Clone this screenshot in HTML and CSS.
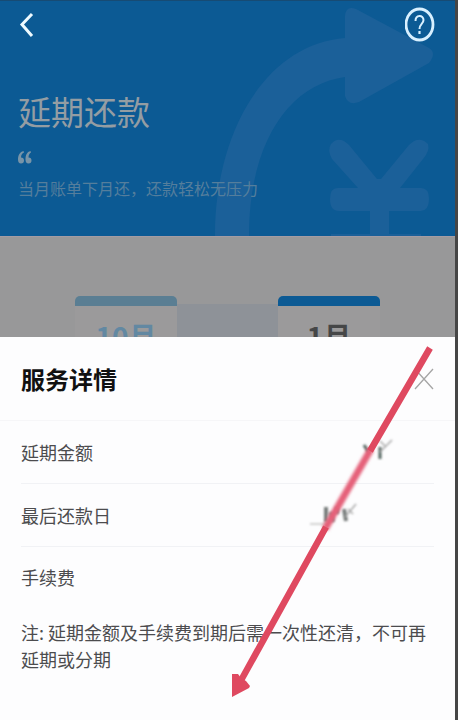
FILE: index.html
```html
<!DOCTYPE html>
<html lang="zh-CN">
<head>
<meta charset="utf-8">
<meta name="viewport" content="width=device-width, initial-scale=1">
<title>延期还款</title>
<link rel="stylesheet" href="styles.css">
</head>
<body>
<div class="app">
  <header class="hero">
    <svg class="hero-art" viewBox="0 0 244 236" aria-hidden="true">
      <path d="M0 236C0 130 52 44 130 38V16Q131 5 141 9L214 48Q222 53 214 63L144 102Q133 106 130 96V77C76 84 34 140 34 236Z"/>
      <path d="M116 144Q124 135 134 145L162 179H166L194 145Q204 135 213 144Q215 151 208 159L185 188H206Q214 188 214 199T206 211H174V234H206V236H116V234H155V211H124Q115 211 115 199T124 188H143L117 159Q112 150 116 144Z"/>
    </svg>
    <nav class="nav">
      <button class="icon-button" type="button" aria-label="返回">
        <svg width="16" height="26" viewBox="0 0 16 26"><path d="M14 2L4 12.500L14 24" fill="none" stroke="#eefaff" stroke-width="3"/></svg>
      </button>
      <button class="icon-button" type="button" aria-label="帮助">
        <svg width="32" height="36" viewBox="0 0 32 36" fill="none" stroke="#d9f0ff"><ellipse cx="14.500" cy="17.500" rx="13.500" ry="15.500" stroke-width="2.800"/><path d="M10.500 14C10.500 7.500 18.500 7.500 18.500 13C18.500 17 14.500 17 14.500 22" stroke-width="2"/><path d="M14.500 24V27" stroke-width="2.200"/></svg>
      </button>
    </nav>
    <h1 class="hero-title">延期还款</h1>
    <svg class="quote" width="14" height="13" viewBox="0 0 14 13" aria-hidden="true"><path d="M5.500 0C2 1 0 4 0 8.500C0 11 1 12.500 3 12.500C5 12.500 6 11.200 6 9.500C6 7.500 5 6.500 3 6.500C3 4 4 2.500 6 1.500ZM12.500 0C9 1 7.500 4 7.500 8.500C7.500 11 8.500 12.500 10.500 12.500C12.500 12.500 13.500 11.200 13.500 9.500C13.500 7.500 12.500 6.500 10.500 6.500C10.500 4 11.500 2.500 13 1.500Z"/></svg>
    <p class="hero-text">当月账单下月还，还款轻松无压力</p>
  </header>

  <section class="months" aria-label="还款月份">
    <div class="month month-from">10月</div>
    <div class="month-link"></div>
    <div class="month month-to">1月</div>
  </section>

  <section class="sheet" aria-labelledby="sheet-title">
    <div class="sheet-head">
      <h2 class="sheet-title" id="sheet-title">服务详情</h2>
      <button class="icon-button" type="button" aria-label="关闭">
        <svg width="20" height="22" viewBox="0 0 20 22"><path d="M1 1L19 21M19 1L1 21" stroke="#a5a5a5" stroke-width="1.300"/></svg>
      </button>
    </div>
    <dl class="details">
      <div class="row"><dt>延期金额</dt><dd></dd></div>
      <div class="row"><dt>最后还款日</dt><dd></dd></div>
      <div class="row"><dt>手续费</dt><dd></dd></div>
    </dl>
    <p class="note">注: 延期金额及手续费到期后需一次性还清，不可再延期或分期</p>
  </section>

  <svg class="marker" viewBox="0 0 458 720" aria-hidden="true">
    <defs>
      <filter id="soft" x="-50%" y="-20%" width="200%" height="140%"><feGaussianBlur stdDeviation="1.500"/></filter>
      <filter id="smudge" x="-50%" y="-50%" width="200%" height="200%"><feGaussianBlur stdDeviation="1"/></filter>
    </defs>
    <g fill="none" filter="url(#smudge)">
      <path d="M364 445L369 453M380 447V459" stroke="#526660" stroke-width="3"/>
      <path d="M326 507V522M331 512L333 522M337 507V514M344 509L346 521" stroke="#777b7a" stroke-width="4"/>
      <path d="M310 524H328" stroke="#d2d2d2" stroke-width="2"/>
      <path d="M380 441L386 447M392 440L380 452M348 509L353 514M356 504L345 517" stroke="#a8a8a8" stroke-width="1.500"/>
    </g>
    <path d="M371 449L325 529" stroke="#e56079" stroke-width="7" filter="url(#soft)"/>
    <path d="M430 348L370 451M326 527L239 684" stroke="#df4960" stroke-width="6.500"/>
    <path d="M232 674H238L241 678L246 681L250 686L249 688L232 697Z" fill="#df4960"/>
  </svg>
</div>
</body>
</html>
```
FILE: styles.css
```css
* {
  box-sizing: border-box;
}

body {
  margin: 0;
  background: #fdfdfe;
  font-family: "Noto Sans CJK SC", sans-serif;
}

h1, h2, p, dl, dd {
  margin: 0;
  font-weight: 400;
}

.app {
  position: relative;
  display: flex;
  flex-direction: column;
  min-height: 100vh;
  overflow: hidden;
  border-right: 3px solid #464646;
}

.hero {
  position: relative;
  padding: 6px 18px 36px;
  background: #0c5a94;
  border-top: 1px solid #174b74;
}

.hero-art {
  position: absolute;
  right: -4px;
  bottom: 0;
  width: 244px;
  fill: #1b6099;
}

.nav {
  position: relative;
  display: flex;
  justify-content: space-between;
  align-items: center;
}

.icon-button {
  display: flex;
  padding: 0;
  border: 0;
  background: none;
  cursor: pointer;
}

.hero-title {
  position: relative;
  margin-top: 48px;
  color: #949da3;
  font-size: 33px;
  line-height: 40px;
}

.quote {
  display: block;
  margin-top: 20px;
  fill: #7894a8;
}

.hero-text {
  position: relative;
  margin-top: 12px;
  color: #557e9c;
  font-size: 16px;
  line-height: 24px;
}

.months {
  display: flex;
  justify-content: center;
  height: 101px;
  padding-top: 59px;
  overflow: hidden;
  background: #989899;
  border-top: 1px solid #a49ca4;
}

.month {
  width: 102px;
  padding-top: 12px;
  border-top: 10px solid;
  border-radius: 5px 5px 0 0;
  background: #9b9a9b;
  font-size: 28px;
  font-weight: 700;
  line-height: 36px;
  text-align: center;
}

.month-from {
  border-color: #5a7e93;
  color: #6288a2;
}

.month-to {
  border-color: #0c5a94;
  color: #454647;
}

.month-link {
  width: 101px;
  margin-top: 8px;
  background: #8e9298;
}

.sheet {
  flex: 1;
  padding-bottom: 32px;
  background: #fdfdfe;
}

.sheet-head {
  display: flex;
  justify-content: space-between;
  align-items: center;
  height: 84px;
  padding: 0 21px;
  border-bottom: 1px solid #f6f6f8;
}

.sheet-title {
  color: #111;
  font-size: 24px;
  font-weight: 700;
  line-height: 36px;
}

.details {
  padding: 0 21px;
}

.row {
  display: flex;
  justify-content: space-between;
  align-items: center;
  height: 63px;
  border-bottom: 1px solid #f1f2f5;
  color: #4c4c4e;
  font-size: 18px;
}

.row:last-child {
  height: 60px;
  border-bottom: 0;
}

.note {
  padding: 12px 20px 0 21px;
  color: #4c4c4e;
  font-size: 18px;
  line-height: 27px;
}

.marker {
  position: absolute;
  top: 0;
  left: 0;
  width: 458px;
  pointer-events: none;
}
```
